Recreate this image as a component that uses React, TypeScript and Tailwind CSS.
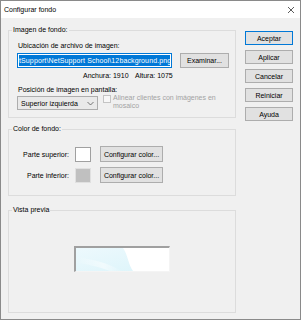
import React from "react";

function Btn({ children, className = "" }: { children: React.ReactNode; className?: string }) {
  return (
    <div className={`flex items-center justify-center bg-[#e1e1e1] border text-black leading-[9px] ${className}`}>
      {children}
    </div>
  );
}

function Group({ label, className = "", children }: { label: string; className?: string; children?: React.ReactNode }) {
  return (
    <div className={`relative border border-[#dcdcdc] ${className}`}>
      <span className="absolute -top-[6px] left-[3px] bg-[#f0f0f0] px-px leading-[9px] text-black whitespace-nowrap">
        {label}
      </span>
      {children}
    </div>
  );
}

export default function App() {
  return (
    <div className="w-[301px] h-[321px] bg-white font-['Liberation_Sans',Arial,sans-serif] text-[7px] leading-[9px] text-black">
      <div className="w-[301px] h-[320px] border border-[#8a8a8a] flex flex-col">
        <div className="h-[17px] bg-white flex items-center justify-between pl-[3px] pr-[5px]">
          <span className="text-[7px]">Configurar fondo</span>
          <svg width="8" height="8" viewBox="0 0 8 8">
            <path d="M1 1 L7 7 M7 1 L1 7" stroke="#333" strokeWidth="0.8" />
          </svg>
        </div>
        <div className="flex-1 bg-[#f0f0f0] flex pl-[7px] pt-[12px]">
          <div className="w-[228px] flex flex-col">
            <Group label="Imagen de fondo:" className="h-[88px]">
              <div className="mt-[10px] ml-[9px]">Ubicación de archivo de imagen:</div>
              <div className="mt-[3px] flex">
                <div className="ml-[8px] w-[155px] h-[15px] border border-[#0078d7] bg-white flex items-center px-px overflow-hidden">
                  <span className="bg-[#0078d7] text-white whitespace-nowrap w-full overflow-hidden leading-[11px] tracking-[0.12px]">
                    tSupport\NetSupport School\12background.png
                  </span>
                </div>
                <Btn className="ml-[8px] w-[49px] h-[15px] border-[#adadad]">Examinar...</Btn>
              </div>
              <div className="mt-[3px] flex">
                <span className="ml-[74px] w-[52px] whitespace-nowrap">Anchura: 1910</span>
                <span className="whitespace-nowrap">Altura: 1075</span>
              </div>
              <div className="mt-[5px] ml-[9px]">Posición de imagen en pantalla:</div>
              <div className="mt-[2px] flex items-start">
                <div className="ml-[8px] w-[81px] h-[14px] border border-[#adadad] bg-[#e9e9e9] flex items-center justify-between pl-[3px] pr-[3px]">
                  <span className="whitespace-nowrap">Superior izquierda</span>
                  <svg width="7" height="5" viewBox="0 0 7 5">
                    <path d="M0.5 1 L3.5 4 L6.5 1" stroke="#555" strokeWidth="0.8" fill="none" />
                  </svg>
                </div>
                <div className="ml-[5px] -mt-px w-[8px] h-[8px] border border-[#c4c4c4] bg-[#f7f7f7]" />
                <div className="ml-[2px] -mt-[2px] leading-[8px] text-[#a3a3a3] whitespace-nowrap">
                  <div>Alinear clientes con imágenes en</div>
                  <div>mosaico</div>
                </div>
              </div>
            </Group>
            <Group label="Color de fondo:" className="mt-[11px] h-[67px]">
              <div className="mt-[16px] flex items-center">
                <span className="w-[60px] text-right whitespace-nowrap">Parte superior:</span>
                <div className="ml-[6px] w-[16px] h-[15px] border border-[#a0a0a0] bg-white" />
                <Btn className="ml-[9px] w-[63px] h-[16px] border-[#adadad]">Configurar color...</Btn>
              </div>
              <div className="mt-[5px] flex items-center">
                <span className="w-[60px] text-right whitespace-nowrap">Parte inferior:</span>
                <div className="ml-[6px] w-[16px] h-[15px] border border-[#e0e0e0] bg-[#c0c0c0]" />
                <Btn className="ml-[9px] w-[63px] h-[16px] border-[#adadad]">Configurar color...</Btn>
              </div>
            </Group>
            <Group label="Vista previa" className="mt-[14px] h-[103px]">
              <div className="mt-[35px] ml-[65px] w-[96px] h-[26px] border-t-2 border-l-2 border-[#a0a0a0] border-r border-b border-r-[#f4f4f4] border-b-[#f4f4f4] overflow-hidden">
                <svg width="93" height="23" viewBox="0 0 93 23" className="block">
                  <defs>
                    <linearGradient id="g1" x1="0" y1="0" x2="1" y2="1">
                      <stop offset="0" stopColor="#edf9fd" />
                      <stop offset="1" stopColor="#dbf4fa" />
                    </linearGradient>
                    <linearGradient id="g2" x1="0" y1="0" x2="1" y2="0">
                      <stop offset="0" stopColor="#ffffff" stopOpacity="0" />
                      <stop offset="0.6" stopColor="#ffffff" stopOpacity="0.5" />
                      <stop offset="1" stopColor="#ffffff" stopOpacity="0" />
                    </linearGradient>
                  </defs>
                  <rect width="93" height="23" fill="url(#g1)" />
                  <path d="M0 9 C16 11 32 15 46 23 L34 23 C24 19 12 16 0 15 Z" fill="url(#g2)" />
                  <path d="M47 0 C52 7 52 16 57 23 L93 23 L93 0 Z" fill="#ffffff" />
                </svg>
              </div>
            </Group>
          </div>
          <div className="ml-[9px] mt-px flex flex-col gap-[5px]">
            <Btn className="w-[48px] h-[14px] border-[#0078d7]">Aceptar</Btn>
            <Btn className="w-[48px] h-[14px] border-[#adadad]">Aplicar</Btn>
            <Btn className="w-[48px] h-[14px] border-[#adadad]">Cancelar</Btn>
            <Btn className="w-[48px] h-[14px] border-[#adadad]">Reiniciar</Btn>
            <Btn className="w-[48px] h-[14px] border-[#adadad]">Ayuda</Btn>
          </div>
        </div>
      </div>
    </div>
  );
}
